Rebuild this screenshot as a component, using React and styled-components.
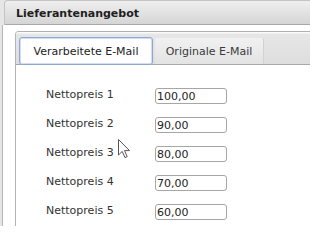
import React from "react";
import styled, { createGlobalStyle } from "styled-components";

const Global = createGlobalStyle`
  html, body { margin: 0; padding: 0; background: #fff; overflow: hidden; }
  body { font-family: "DejaVu Sans", Verdana, sans-serif; font-size: 11px; }
`;

const Screen = styled.div`
  position: relative;
  width: 310px;
  height: 226px;
  overflow: hidden;
  background: #e6e6e6;
  display: flex;
  flex-direction: column;
`;

const Header = styled.div`
  margin: 0 -30px 0 4px;
  height: 25px;
  flex: none;
  box-sizing: border-box;
  border: 1px solid #c4c4c4;
  border-bottom: 1px solid #a9a9a9;
  border-radius: 4px 4px 0 0;
  background: linear-gradient(#efefef, #d5d5d5);
  display: flex;
  align-items: center;
  padding-left: 11px;
  padding-top: 1px;
  font-weight: bold;
  color: #1e1e1e;
`;

const Body = styled.div`
  flex: 1;
  margin-left: 2px;
  border-left: 1px solid #b4b4b4;
  background: #fff;
  padding: 6px 0 0 12px;
  display: flex;
  flex-direction: column;
`;

const TabPanel = styled.div`
  flex: 1;
  margin-right: -30px;
  border-left: 1px solid #b4b4b4;
  border-top: 1px solid #b0b0b0;
  border-top-left-radius: 4px;
  display: flex;
  flex-direction: column;
`;

const TabStrip = styled.div`
  height: 32px;
  flex: none;
  border-bottom: 1px solid #a8a8a8;
  border-top-left-radius: 3px;
  background: linear-gradient(#fafafa 0, #fafafa 1px, #e6e6e6 2px, #dedede 100%);
  display: flex;
  align-items: flex-end;
  gap: 2px;
  padding-left: 3px;
`;

const Tab = styled.div`
  box-sizing: border-box;
  display: flex;
  align-items: center;
  justify-content: center;
  white-space: nowrap;
  color: ${(p) => (p.$active ? "#222" : "#3a3a3a")};
  width: ${(p) => (p.$active ? "134px" : "109px")};
  height: ${(p) => (p.$active ? "28px" : "26px")};
  margin-bottom: ${(p) => (p.$active ? "-1px" : "0")};
  background: ${(p) =>
    p.$active ? "#fff" : "linear-gradient(#f1f1f1, #e3e3e3)"};
  border: ${(p) => (p.$active ? "1px solid #8ea6d4" : "none")};
  border-right: ${(p) => (p.$active ? "1px solid #8ea6d4" : "1px solid #d2d2d2")};
  box-shadow: ${(p) => (p.$active ? "inset 0 0 0 1px #d3def2" : "none")};
  border-radius: ${(p) => (p.$active ? "3px" : "2px 2px 0 0")};
`;

const Form = styled.div`
  display: flex;
  flex-direction: column;
  gap: 13px;
  padding: 23px 0 0 30px;
`;

const Row = styled.div`
  display: flex;
  align-items: flex-start;
  height: 16px;
`;

const Label = styled.div`
  width: 109px;
  line-height: 13px;
  color: #333;
`;

const Input = styled.input`
  box-sizing: border-box;
  width: 72px;
  height: 16px;
  margin: 0;
  padding: 0 1px;
  border: 1px solid #a6a6a6;
  border-radius: 3px;
  font-family: "DejaVu Sans", Verdana, sans-serif;
  font-size: 11px;
  color: #222;
  background: #fff;
  outline: none;
`;

const Cursor = styled.svg`
  position: absolute;
  left: 118px;
  top: 139px;
  width: 13px;
  height: 20px;
`;

const rows = [
  ["Nettopreis 1", "100,00"],
  ["Nettopreis 2", "90,00"],
  ["Nettopreis 3", "80,00"],
  ["Nettopreis 4", "70,00"],
  ["Nettopreis 5", "60,00"],
];

export default function App() {
  return (
    <>
      <Global />
      <Screen>
        <Header>Lieferantenangebot</Header>
        <Body>
          <TabPanel>
            <TabStrip>
              <Tab $active>Verarbeitete E-Mail</Tab>
              <Tab>Originale E-Mail</Tab>
            </TabStrip>
            <Form>
              {rows.map(([l, v]) => (
                <Row key={l}>
                  <Label>{l}</Label>
                  <Input defaultValue={v} readOnly />
                </Row>
              ))}
            </Form>
          </TabPanel>
        </Body>
        <Cursor viewBox="0 0 13 20">
          <path
            d="M0.5 0.5 L0.5 16 L4.2 12.4 L7 18.6 L9.2 17.6 L6.5 11.6 L11.5 11.6 Z"
            fill="#fff"
            stroke="#555"
            strokeWidth="1"
            strokeLinejoin="miter"
          />
        </Cursor>
      </Screen>
    </>
  );
}
